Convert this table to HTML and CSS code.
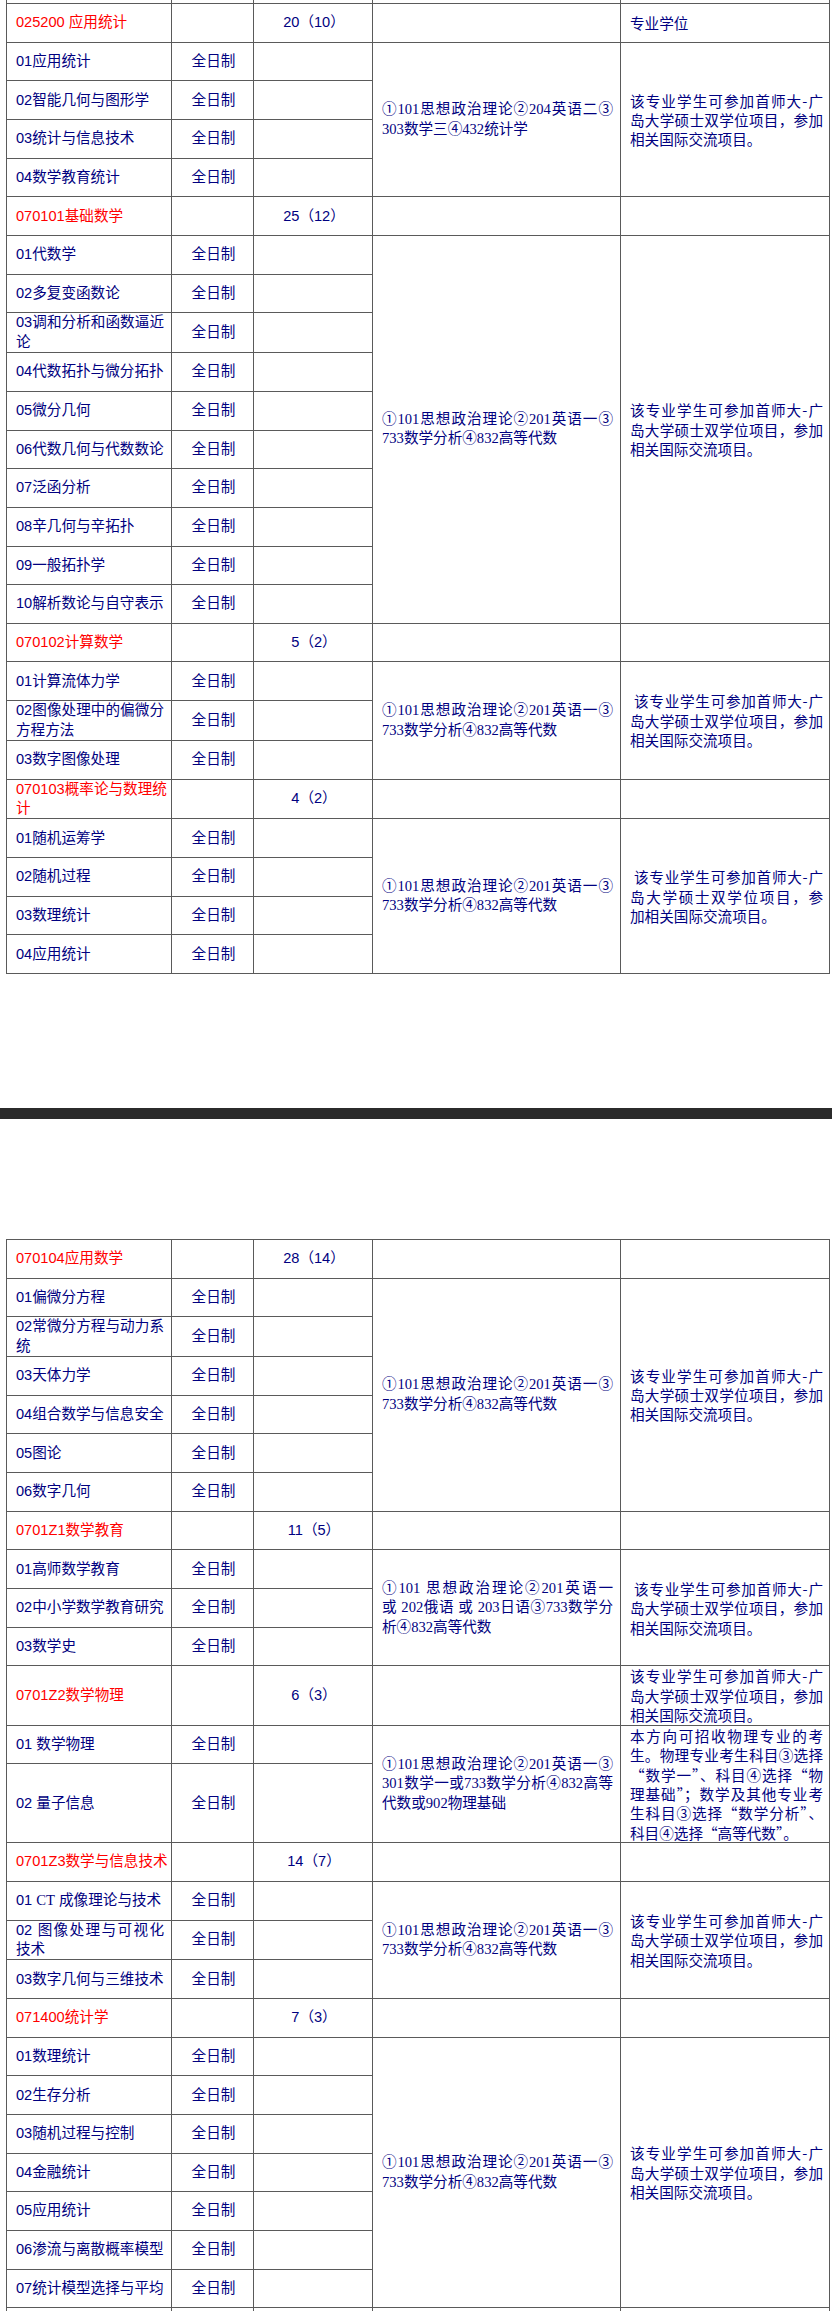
FILE: index.html
```html
<!DOCTYPE html>
<html lang="zh-CN">
<head>
<meta charset="utf-8">
<title>招生专业目录</title>
<link rel="stylesheet" href="styles.css">
</head>
<body>
<table class="grid first">
  <colgroup><col class="c1"><col class="c2"><col class="c3"><col class="c4"><col class="c5"></colgroup>
  <tr class="row"><td></td><td></td><td></td><td></td><td></td></tr>
  <tr class="row"><td class="code">025200 应用统计</td><td></td><td class="plan">20（10）</td><td></td><td class="note">专业学位</td></tr>
  <tr class="row"><td>01应用统计</td><td class="mode">全日制</td><td></td>
    <td class="exam" rowspan="4"><span class="jl">①101思想政治理论②204英语二③</span>303数学三④432统计学</td>
    <td class="note" rowspan="4"><span class="jl">该专业学生可参加首师大-广</span><span class="jl">岛大学硕士双学位项目，参加</span>相关国际交流项目。</td></tr>
  <tr class="row"><td>02智能几何与图形学</td><td class="mode">全日制</td><td></td></tr>
  <tr class="row"><td>03统计与信息技术</td><td class="mode">全日制</td><td></td></tr>
  <tr class="row"><td>04数学教育统计</td><td class="mode">全日制</td><td></td></tr>

  <tr class="row"><td class="code">070101基础数学</td><td></td><td class="plan">25（12）</td><td></td><td></td></tr>
  <tr class="row"><td>01代数学</td><td class="mode">全日制</td><td></td>
    <td class="exam" rowspan="10"><span class="jl">①101思想政治理论②201英语一③</span>733数学分析④832高等代数</td>
    <td class="note" rowspan="10"><span class="jl">该专业学生可参加首师大-广</span><span class="jl">岛大学硕士双学位项目，参加</span>相关国际交流项目。</td></tr>
  <tr class="row"><td>02多复变函数论</td><td class="mode">全日制</td><td></td></tr>
  <tr class="row"><td><span class="jl">03调和分析和函数逼近</span>论</td><td class="mode">全日制</td><td></td></tr>
  <tr class="row"><td>04代数拓扑与微分拓扑</td><td class="mode">全日制</td><td></td></tr>
  <tr class="row"><td>05微分几何</td><td class="mode">全日制</td><td></td></tr>
  <tr class="row"><td>06代数几何与代数数论</td><td class="mode">全日制</td><td></td></tr>
  <tr class="row"><td>07泛函分析</td><td class="mode">全日制</td><td></td></tr>
  <tr class="row"><td>08辛几何与辛拓扑</td><td class="mode">全日制</td><td></td></tr>
  <tr class="row"><td>09一般拓扑学</td><td class="mode">全日制</td><td></td></tr>
  <tr class="row"><td>10解析数论与自守表示</td><td class="mode">全日制</td><td></td></tr>

  <tr class="row"><td class="code">070102计算数学</td><td></td><td class="plan">5（2）</td><td></td><td></td></tr>
  <tr class="row"><td>01计算流体力学</td><td class="mode">全日制</td><td></td>
    <td class="exam" rowspan="3"><span class="jl">①101思想政治理论②201英语一③</span>733数学分析④832高等代数</td>
    <td class="note" rowspan="3"><span class="jl">&nbsp;该专业学生可参加首师大-广</span><span class="jl">岛大学硕士双学位项目，参加</span>相关国际交流项目。</td></tr>
  <tr class="row"><td><span class="jl">02图像处理中的偏微分</span>方程方法</td><td class="mode">全日制</td><td></td></tr>
  <tr class="row"><td>03数字图像处理</td><td class="mode">全日制</td><td></td></tr>

  <tr class="row"><td class="code"><span class="jl">070103概率论与数理统</span>计</td><td></td><td class="plan">4（2）</td><td></td><td></td></tr>
  <tr class="row"><td>01随机运筹学</td><td class="mode">全日制</td><td></td>
    <td class="exam" rowspan="4"><span class="jl">①101思想政治理论②201英语一③</span>733数学分析④832高等代数</td>
    <td class="note" rowspan="4"><span class="jl">&nbsp;该专业学生可参加首师大-广</span><span class="jl">岛大学硕士双学位项目，参</span>加相关国际交流项目。</td></tr>
  <tr class="row"><td>02随机过程</td><td class="mode">全日制</td><td></td></tr>
  <tr class="row"><td>03数理统计</td><td class="mode">全日制</td><td></td></tr>
  <tr class="row"><td>04应用统计</td><td class="mode">全日制</td><td></td></tr>
</table>

<div class="page-break"></div>

<table class="grid second">
  <colgroup><col class="c1"><col class="c2"><col class="c3"><col class="c4"><col class="c5"></colgroup>
  <tr class="row"><td class="code">070104应用数学</td><td></td><td class="plan">28（14）</td><td></td><td></td></tr>
  <tr class="row"><td>01偏微分方程</td><td class="mode">全日制</td><td></td>
    <td class="exam" rowspan="6"><span class="jl">①101思想政治理论②201英语一③</span>733数学分析④832高等代数</td>
    <td class="note" rowspan="6"><span class="jl">该专业学生可参加首师大-广</span><span class="jl">岛大学硕士双学位项目，参加</span>相关国际交流项目。</td></tr>
  <tr class="row"><td><span class="jl">02常微分方程与动力系</span>统</td><td class="mode">全日制</td><td></td></tr>
  <tr class="row"><td>03天体力学</td><td class="mode">全日制</td><td></td></tr>
  <tr class="row"><td>04组合数学与信息安全</td><td class="mode">全日制</td><td></td></tr>
  <tr class="row"><td>05图论</td><td class="mode">全日制</td><td></td></tr>
  <tr class="row"><td>06数字几何</td><td class="mode">全日制</td><td></td></tr>

  <tr class="row"><td class="code">0701Z1数学教育</td><td></td><td class="plan">11（5）</td><td></td><td></td></tr>
  <tr class="row"><td>01高师数学教育</td><td class="mode">全日制</td><td></td>
    <td class="exam" rowspan="3"><span class="jl">①101 思想政治理论②201英语一</span><span class="jl">或 202俄语 或 203日语③733数学分</span>析④832高等代数</td>
    <td class="note" rowspan="3"><span class="jl">&nbsp;该专业学生可参加首师大-广</span><span class="jl">岛大学硕士双学位项目，参加</span>相关国际交流项目。</td></tr>
  <tr class="row"><td>02中小学数学教育研究</td><td class="mode">全日制</td><td></td></tr>
  <tr class="row"><td>03数学史</td><td class="mode">全日制</td><td></td></tr>

  <tr class="row"><td class="code">0701Z2数学物理</td><td></td><td class="plan">6（3）</td><td></td>
    <td class="note"><span class="jl">该专业学生可参加首师大-广</span><span class="jl">岛大学硕士双学位项目，参加</span>相关国际交流项目。</td></tr>
  <tr class="row"><td>01 数学物理</td><td class="mode">全日制</td><td></td>
    <td class="exam" rowspan="2"><span class="jl">①101思想政治理论②201英语一③</span><span class="jl">301数学一或733数学分析④832高等</span>代数或902物理基础</td>
    <td class="note" rowspan="2"><span class="jl">本方向可招收物理专业的考</span><span class="jl">生。物理专业考生科目③选择</span><span class="jl">“数学一”、科目④选择“物</span><span class="jl">理基础”；数学及其他专业考</span><span class="jl">生科目③选择“数学分析”、</span>科目④选择“高等代数”。</td></tr>
  <tr class="row tall"><td>02 量子信息</td><td class="mode">全日制</td><td></td></tr>

  <tr class="row"><td class="code">0701Z3数学与信息技术</td><td></td><td class="plan">14（7）</td><td></td><td></td></tr>
  <tr class="row"><td>01 <span class="latin">CT</span> 成像理论与技术</td><td class="mode">全日制</td><td></td>
    <td class="exam" rowspan="3"><span class="jl">①101思想政治理论②201英语一③</span>733数学分析④832高等代数</td>
    <td class="note" rowspan="3"><span class="jl">该专业学生可参加首师大-广</span><span class="jl">岛大学硕士双学位项目，参加</span>相关国际交流项目。</td></tr>
  <tr class="row"><td><span class="jl">02 图像处理与可视化</span>技术</td><td class="mode">全日制</td><td></td></tr>
  <tr class="row"><td>03数字几何与三维技术</td><td class="mode">全日制</td><td></td></tr>

  <tr class="row"><td class="code">071400统计学</td><td></td><td class="plan">7（3）</td><td></td><td></td></tr>
  <tr class="row"><td>01数理统计</td><td class="mode">全日制</td><td></td>
    <td class="exam" rowspan="7"><span class="jl">①101思想政治理论②201英语一③</span>733数学分析④832高等代数</td>
    <td class="note" rowspan="7"><span class="jl">该专业学生可参加首师大-广</span><span class="jl">岛大学硕士双学位项目，参加</span>相关国际交流项目。</td></tr>
  <tr class="row"><td>02生存分析</td><td class="mode">全日制</td><td></td></tr>
  <tr class="row"><td>03随机过程与控制</td><td class="mode">全日制</td><td></td></tr>
  <tr class="row"><td>04金融统计</td><td class="mode">全日制</td><td></td></tr>
  <tr class="row"><td>05应用统计</td><td class="mode">全日制</td><td></td></tr>
  <tr class="row"><td>06渗流与离散概率模型</td><td class="mode">全日制</td><td></td></tr>
  <tr class="row"><td>07统计模型选择与平均</td><td class="mode">全日制</td><td></td></tr>
  <tr class="row"><td></td><td></td><td></td><td></td><td></td></tr>
</table>
</body>
</html>
```

FILE: styles.css
```css
html, body {
  margin: 0;
  padding: 0;
  background: #ffffff;
}

body {
  width: 832px;
  overflow: hidden;
  font-family: "Liberation Sans", "Noto Sans CJK SC", sans-serif;
  font-size: 14.6px;
  line-height: 19.4px;
  color: #000080;
}

.grid {
  border-collapse: collapse;
  table-layout: fixed;
  width: 823px;
  margin-left: 6px;
}

.grid .c1 { width: 165px; }
.grid .c2 { width: 82px; }
.grid .c3 { width: 119px; }
.grid .c4 { width: 248px; }
.grid .c5 { width: 209px; }

.grid td {
  border: 1px solid #5a5a5a;
  padding: 0 7px 0 9px;
  vertical-align: middle;
  white-space: nowrap;
  overflow: hidden;
}

.row { height: 38.67px; }
.row.tall { height: 79px; }

.first { margin-top: -35.5px; }
.second { margin-top: 120px; }

.page-break {
  height: 11px;
  margin-top: 134px;
  background: #2b2b2b;
}

.code { color: #ff0000; }

.mode, .plan { text-align: center; }

.exam {
  font-family: "Liberation Serif", "Noto Sans CJK SC", serif;
}

.grid td.note {
  font-family: "Noto Sans CJK SC", sans-serif;
  padding-right: 6px;
}

.latin {
  font-family: "Liberation Serif", serif;
}

.jl {
  display: block;
  text-align: justify;
  text-align-last: justify;
}
```
